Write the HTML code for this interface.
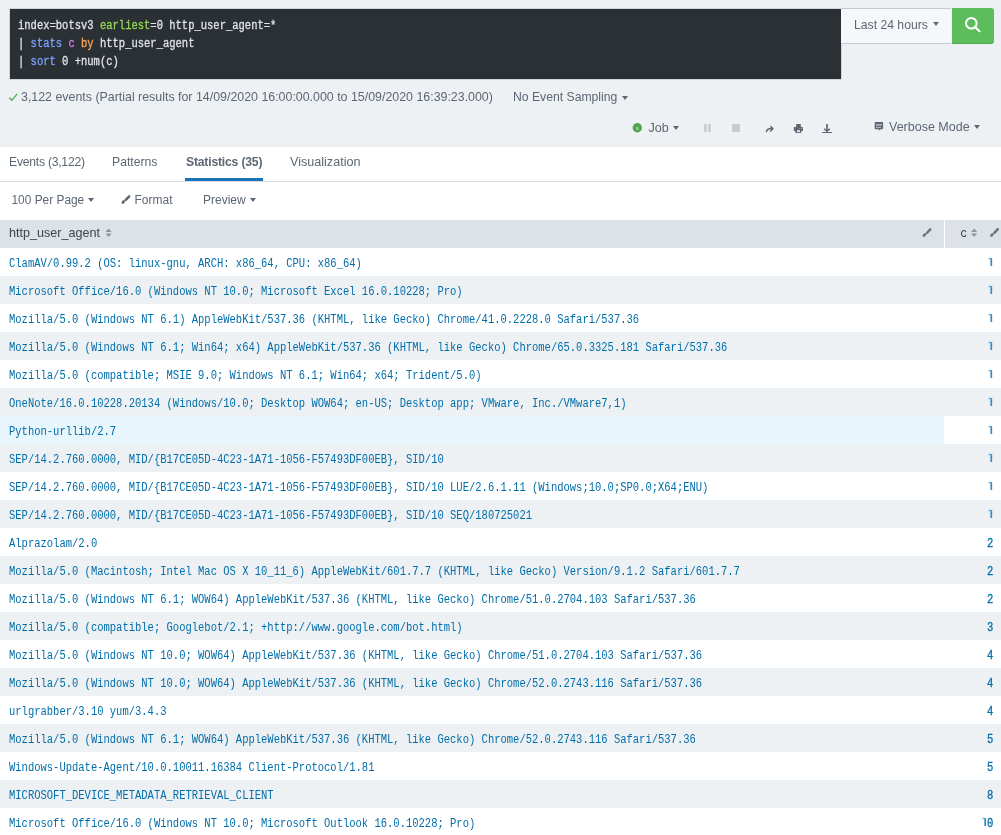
<!DOCTYPE html>
<html><head><meta charset="utf-8">
<style>
*{box-sizing:border-box;margin:0;padding:0}
html,body{width:1001px;height:835px;overflow:hidden;background:#fff}
body{font-family:"Liberation Sans",sans-serif;font-size:12px;color:#5c6773;position:relative}
.top{position:absolute;left:0;top:0;width:1001px;height:147px;background:#eef1f4}
.t{position:absolute;white-space:nowrap;line-height:12px}
.spl{position:absolute;left:10px;top:9px;width:831px;height:70px;background:#2b3034;box-shadow:0 0 0 1px rgba(180,190,202,0.55)}
.q{position:absolute;left:8px;-webkit-text-stroke:0.3px currentColor;font-family:"Liberation Mono",monospace;font-size:12px;line-height:14px;color:#dfe3e7;transform:scaleX(0.875);transform-origin:0 0;white-space:nowrap}
.tp{position:absolute;left:841px;top:8px;width:110px;height:36px;background:#f6f7fa;border-top:1px solid #c3cbd4;border-bottom:1px solid #c3cbd4}
.go{position:absolute;left:952px;top:8px;width:42px;height:36px;background:#5cbd5c;border-radius:0 3px 3px 0;border-bottom:1px solid #4ea84e}
.tabs{position:absolute;left:0;top:147px;width:1001px;height:35px;background:#fff;border-bottom:1px solid #d5dce3}
.uline{position:absolute;left:185px;top:31px;width:78px;height:3px;background:#1a73b8}
.hdr{position:absolute;left:0;top:220px;width:1001px;height:28px;background:#dde2e9}
.vdiv{position:absolute;left:944px;top:0;width:1px;height:28px;background:#fff}
.row{position:absolute;left:0;width:1001px;height:28px}
.row.odd{background:#fff}
.row.even{background:#eef1f4}
.one{display:inline-block;width:7.2px;height:14px;vertical-align:top;position:relative}
.one i{position:absolute;left:3.8px;top:1px;width:2.3px;height:8px;background:#3a8cc2}
.one b{position:absolute;left:2.4px;top:1.2px;width:2.2px;height:1.3px;background:#3a8cc2;transform:skewY(-35deg)}
.hl{position:absolute;left:0;top:0;width:944px;height:28px;background:#e7f6fd}
.cell{position:absolute;left:9px;top:9px;font-family:"Liberation Mono",monospace;font-size:12px;line-height:14px;color:#006eaa;transform:scaleX(0.875);transform-origin:0 0;white-space:nowrap}
.num{-webkit-text-stroke:0.3px currentColor;position:absolute;right:8px;top:9px;font-family:"Liberation Mono",monospace;font-size:12px;line-height:14px;color:#006eaa;transform:scaleX(0.875);transform-origin:100% 0;white-space:nowrap}
.car{position:absolute;width:0;height:0;border-left:3.7px solid transparent;border-right:3.7px solid transparent;border-top:4.2px solid #5c6773}
svg{position:absolute;overflow:visible}
</style></head><body>
<div id="wrap" style="position:absolute;left:0;top:0;width:1001px;height:835px;will-change:transform">
<div class="top"></div>
<div class="spl">
  <div class="q" style="top:10px">index=botsv3 <span style="color:#93d655">earliest</span>=0 http_user_agent=*</div>
  <div class="q" style="top:28px">| <span style="color:#78a2fa">stats</span> <span style="color:#d47be3">c</span> <span style="color:#fba85a">by</span> http_user_agent</div>
  <div class="q" style="top:46px">| <span style="color:#78a2fa">sort</span> 0 +num(c)</div>
</div>
<div class="tp"></div>
<span class="t" style="left:854px;top:19px;font-size:12.2px">Last 24 hours</span>
<span class="car" style="left:933px;top:22px"></span>
<div class="go"></div>
<svg style="left:0;top:0" width="1001" height="60"><circle cx="971.3" cy="23.3" r="5.3" fill="none" stroke="#fff" stroke-width="2"/><line x1="975.3" y1="27.3" x2="979.5" y2="31.2" stroke="#fff" stroke-width="2.2" stroke-linecap="round"/></svg>

<svg style="left:0;top:80px" width="30" height="30"><polyline points="9.2,17.6 11.8,20.3 17.2,13.8" fill="none" stroke="#4aa84e" stroke-width="1.3"/></svg>
<span class="t" style="left:21px;top:91px;font-size:12.4px">3,122 events (Partial results for 14/09/2020 16:00:00.000 to 15/09/2020 16:39:23.000)</span>
<span class="t" style="left:513px;top:91px;font-size:12.2px">No Event Sampling</span>
<span class="car" style="left:621.5px;top:96px"></span>

<!-- job row -->
<svg style="left:0;top:0" width="1001" height="140">
  <circle cx="637.3" cy="127.8" r="4.7" fill="#4fa64f"/>
  <text x="637.3" y="130" font-size="5.5" font-family="Liberation Sans" fill="#d8efd8" text-anchor="middle">s</text>
  <rect x="704.1" y="124" width="2.6" height="8" fill="#c3cbd4"/><rect x="708.2" y="124" width="2.6" height="8" fill="#c3cbd4"/>
  <rect x="732.1" y="124" width="7.9" height="8" fill="#c3cbd4"/>
  <path d="M766.2 132.2 C766.6 129.6 768.6 128.2 772.2 128.4" fill="none" stroke="#5c6773" stroke-width="1.5"/>
  <path d="M770.3 126.2 L772.9 128.5 L770.3 131.5" fill="none" stroke="#5c6773" stroke-width="1.5"/>
  <rect x="796.2" y="124" width="4.6" height="3.4" fill="#5c6773"/>
  <rect x="793.8" y="127.1" width="9.1" height="4" rx="0.6" fill="#5c6773"/>
  <rect x="795.3" y="129.7" width="5.9" height="3.2" fill="#5c6773"/>
  <rect x="797" y="130.2" width="3" height="1.7" fill="#eef1f4"/>
  <rect x="799" y="128" width="0.8" height="0.8" fill="#b8c0c8"/><rect x="800.9" y="128" width="0.8" height="0.8" fill="#b8c0c8"/>
  <rect x="826.1" y="124" width="1.9" height="6.5" fill="#6d7883"/>
  <path d="M824.2 128.8 L827 131.3 L829.8 128.8" fill="none" stroke="#5c6773" stroke-width="1.5"/>
  <rect x="822" y="131.9" width="10" height="1.2" rx="0.5" fill="#5c6773"/>
  <path d="M875.6 122.1 h6.6 a0.9 0.9 0 0 1 0.9 0.9 v5.3 a0.9 0.9 0 0 1 -0.9 0.9 h-1.6 l-1.8 1.6 v-1.6 h-3.2 a0.9 0.9 0 0 1 -0.9 -0.9 v-5.3 a0.9 0.9 0 0 1 0.9 -0.9 z" fill="#5c6773"/>
  <rect x="876" y="124" width="5.9" height="1.8" fill="#a9b1ba"/><rect x="876" y="126.9" width="5" height="1" fill="#b8c0c8"/>
</svg>
<span class="t" style="left:648.5px;top:122px;font-size:12.6px">Job</span>
<span class="car" style="left:672.5px;top:125.5px"></span>
<span class="t" style="left:889px;top:121px;font-size:12.5px">Verbose Mode</span>
<span class="car" style="left:974px;top:124.8px"></span>

<div class="tabs">
  <span class="t" style="left:9px;top:9px;font-size:12.2px;letter-spacing:-0.25px">Events (3,122)</span>
  <span class="t" style="left:112px;top:9px;font-size:12.2px">Patterns</span>
  <span class="t" style="left:186px;top:9px;font-size:12.2px;font-weight:bold;letter-spacing:-0.2px">Statistics (35)</span>
  <span class="t" style="left:290px;top:9px;font-size:12.6px">Visualization</span>
  <div class="uline"></div>
</div>

<!-- toolbar -->
<span class="t" style="left:11.5px;top:194px;font-size:11.9px">100 Per Page</span>
<span class="car" style="left:88px;top:198px"></span>
<svg style="left:0;top:0" width="300" height="220"><line x1="129.2" y1="196.3" x2="125.8" y2="199.9" stroke="#5c6773" stroke-width="2.5" stroke-linecap="round"/><ellipse cx="123.3" cy="202.0" rx="2.1" ry="1.4" transform="rotate(-45 123.3 202.0)" fill="#5c6773"/></svg>
<span class="t" style="left:134.5px;top:194px;font-size:12px">Format</span>
<span class="t" style="left:203px;top:194px;font-size:12px">Preview</span>
<span class="car" style="left:249.5px;top:198px"></span>

<div class="hdr">
  <span class="t" style="left:9px;top:7px;font-size:12.6px;color:#3c444d">http_user_agent</span>
  <div class="vdiv"></div>
  <span class="t" style="left:960.5px;top:7px;font-size:12.2px;color:#3c444d">c</span>
  <svg style="left:0;top:0" width="1001" height="28">
    <path d="M105.5 12 L108.6 8.5 L111.7 12 Z M105.5 13.4 L108.6 17 L111.7 13.4 Z" fill="#8a96a0"/>
    <path d="M971 12 L974.1 8.5 L977.2 12 Z M971 13.4 L974.1 17 L977.2 13.4 Z" fill="#8a96a0"/>
    <line x1="930.3" y1="9.4" x2="926.9" y2="13.0" stroke="#6b7580" stroke-width="2.5" stroke-linecap="round"/><ellipse cx="924.4" cy="15.1" rx="2.1" ry="1.4" transform="rotate(-45 924.4 15.1)" fill="#6b7580"/>
    <line x1="997.8" y1="9.2" x2="994.4" y2="12.8" stroke="#6b7580" stroke-width="2.5" stroke-linecap="round"/><ellipse cx="991.9" cy="14.9" rx="2.1" ry="1.4" transform="rotate(-45 991.9 14.9)" fill="#6b7580"/>
  </svg>
</div>
<div class="row odd" style="top:248px"><div class="cell">ClamAV/0.99.2 (OS: linux-gnu, ARCH: x86_64, CPU: x86_64)</div><div class="num"><span class="one"><i></i><b></b></span></div></div>
<div class="row even" style="top:276px"><div class="cell">Microsoft Office/16.0 (Windows NT 10.0; Microsoft Excel 16.0.10228; Pro)</div><div class="num"><span class="one"><i></i><b></b></span></div></div>
<div class="row odd" style="top:304px"><div class="cell">Mozilla/5.0 (Windows NT 6.1) AppleWebKit/537.36 (KHTML, like Gecko) Chrome/41.0.2228.0 Safari/537.36</div><div class="num"><span class="one"><i></i><b></b></span></div></div>
<div class="row even" style="top:332px"><div class="cell">Mozilla/5.0 (Windows NT 6.1; Win64; x64) AppleWebKit/537.36 (KHTML, like Gecko) Chrome/65.0.3325.181 Safari/537.36</div><div class="num"><span class="one"><i></i><b></b></span></div></div>
<div class="row odd" style="top:360px"><div class="cell">Mozilla/5.0 (compatible; MSIE 9.0; Windows NT 6.1; Win64; x64; Trident/5.0)</div><div class="num"><span class="one"><i></i><b></b></span></div></div>
<div class="row even" style="top:388px"><div class="cell">OneNote/16.0.10228.20134 (Windows/10.0; Desktop WOW64; en-US; Desktop app; VMware, Inc./VMware7,1)</div><div class="num"><span class="one"><i></i><b></b></span></div></div>
<div class="row odd" style="top:416px"><div class="hl"></div><div class="cell">Python-urllib/2.7</div><div class="num"><span class="one"><i></i><b></b></span></div></div>
<div class="row even" style="top:444px"><div class="cell">SEP/14.2.760.0000, MID/{B17CE05D-4C23-1A71-1056-F57493DF00EB}, SID/10</div><div class="num"><span class="one"><i></i><b></b></span></div></div>
<div class="row odd" style="top:472px"><div class="cell">SEP/14.2.760.0000, MID/{B17CE05D-4C23-1A71-1056-F57493DF00EB}, SID/10 LUE/2.6.1.11 (Windows;10.0;SP0.0;X64;ENU)</div><div class="num"><span class="one"><i></i><b></b></span></div></div>
<div class="row even" style="top:500px"><div class="cell">SEP/14.2.760.0000, MID/{B17CE05D-4C23-1A71-1056-F57493DF00EB}, SID/10 SEQ/180725021</div><div class="num"><span class="one"><i></i><b></b></span></div></div>
<div class="row odd" style="top:528px"><div class="cell">Alprazolam/2.0</div><div class="num">2</div></div>
<div class="row even" style="top:556px"><div class="cell">Mozilla/5.0 (Macintosh; Intel Mac OS X 10_11_6) AppleWebKit/601.7.7 (KHTML, like Gecko) Version/9.1.2 Safari/601.7.7</div><div class="num">2</div></div>
<div class="row odd" style="top:584px"><div class="cell">Mozilla/5.0 (Windows NT 6.1; WOW64) AppleWebKit/537.36 (KHTML, like Gecko) Chrome/51.0.2704.103 Safari/537.36</div><div class="num">2</div></div>
<div class="row even" style="top:612px"><div class="cell">Mozilla/5.0 (compatible; Googlebot/2.1; +http://www.google.com/bot.html)</div><div class="num">3</div></div>
<div class="row odd" style="top:640px"><div class="cell">Mozilla/5.0 (Windows NT 10.0; WOW64) AppleWebKit/537.36 (KHTML, like Gecko) Chrome/51.0.2704.103 Safari/537.36</div><div class="num">4</div></div>
<div class="row even" style="top:668px"><div class="cell">Mozilla/5.0 (Windows NT 10.0; WOW64) AppleWebKit/537.36 (KHTML, like Gecko) Chrome/52.0.2743.116 Safari/537.36</div><div class="num">4</div></div>
<div class="row odd" style="top:696px"><div class="cell">urlgrabber/3.10 yum/3.4.3</div><div class="num">4</div></div>
<div class="row even" style="top:724px"><div class="cell">Mozilla/5.0 (Windows NT 6.1; WOW64) AppleWebKit/537.36 (KHTML, like Gecko) Chrome/52.0.2743.116 Safari/537.36</div><div class="num">5</div></div>
<div class="row odd" style="top:752px"><div class="cell">Windows-Update-Agent/10.0.10011.16384 Client-Protocol/1.81</div><div class="num">5</div></div>
<div class="row even" style="top:780px"><div class="cell">MICROSOFT_DEVICE_METADATA_RETRIEVAL_CLIENT</div><div class="num">8</div></div>
<div class="row odd" style="top:808px"><div class="cell">Microsoft Office/16.0 (Windows NT 10.0; Microsoft Outlook 16.0.10228; Pro)</div><div class="num"><span class="one"><i></i><b></b></span>0</div></div>
</div>
</body></html>
